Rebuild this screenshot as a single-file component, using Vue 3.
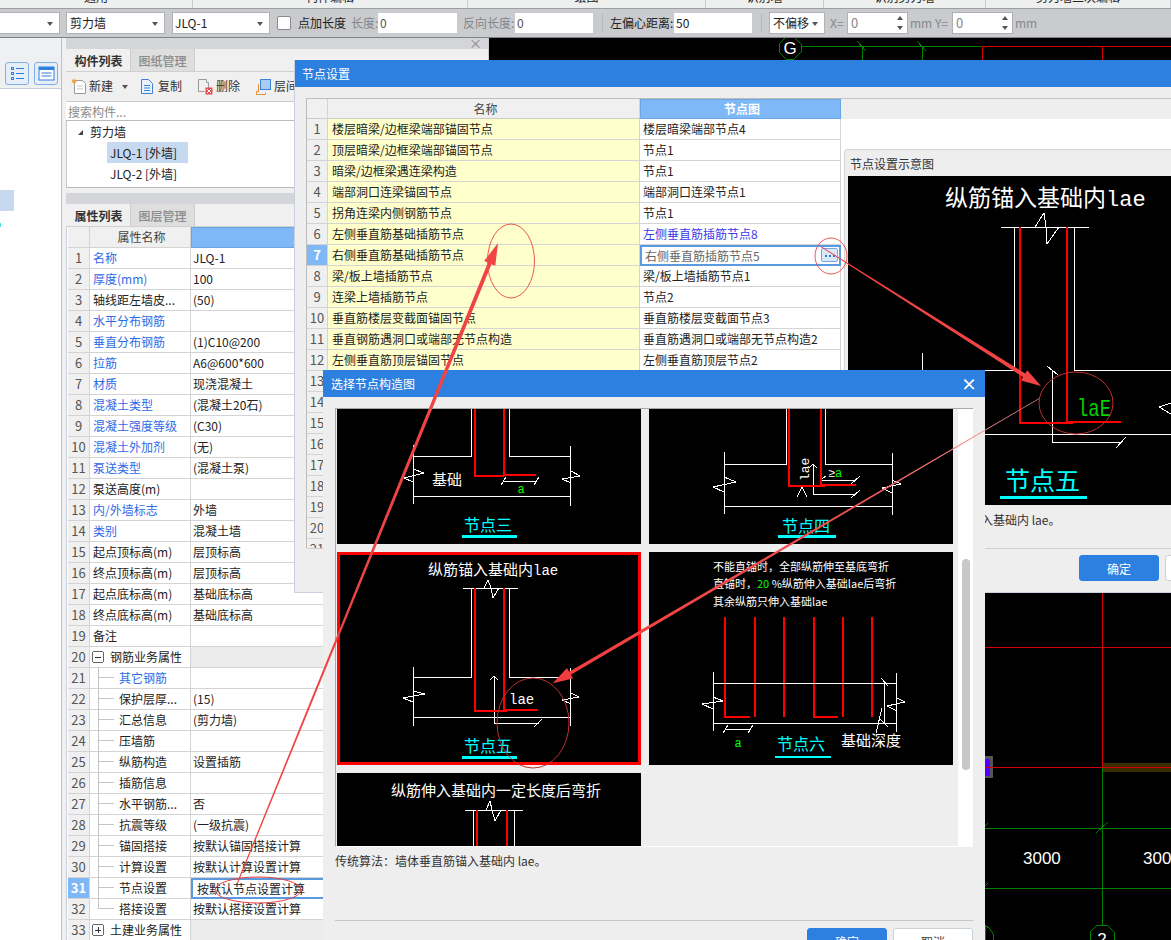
<script setup>
const ribbon = ['通用', '构件编辑', '绘图', '识别墙', '识别剪力墙', '剪力墙二次编辑']

const props = [
  { name: '名称', val: 'JLQ-1', blue: true },
  { name: '厚度(mm)', val: '100', blue: true },
  { name: '轴线距左墙皮...', val: '(50)' },
  { name: '水平分布钢筋', val: '', blue: true },
  { name: '垂直分布钢筋', val: '(1)C10@200', blue: true },
  { name: '拉筋', val: 'A6@600*600', blue: true },
  { name: '材质', val: '现浇混凝土', blue: true },
  { name: '混凝土类型', val: '(混凝土20石)', blue: true },
  { name: '混凝土强度等级', val: '(C30)', blue: true },
  { name: '混凝土外加剂', val: '(无)', blue: true },
  { name: '泵送类型', val: '(混凝土泵)', blue: true },
  { name: '泵送高度(m)', val: '' },
  { name: '内/外墙标志', val: '外墙', blue: true },
  { name: '类别', val: '混凝土墙', blue: true },
  { name: '起点顶标高(m)', val: '层顶标高' },
  { name: '终点顶标高(m)', val: '层顶标高' },
  { name: '起点底标高(m)', val: '基础底标高' },
  { name: '终点底标高(m)', val: '基础底标高' },
  { name: '备注', val: '' },
  { name: '钢筋业务属性', group: 'minus' },
  { name: '其它钢筋', val: '', blue: true, tree: true },
  { name: '保护层厚...', val: '(15)', tree: true },
  { name: '汇总信息', val: '(剪力墙)', tree: true },
  { name: '压墙筋', val: '', tree: true },
  { name: '纵筋构造', val: '设置插筋', tree: true },
  { name: '插筋信息', val: '', tree: true },
  { name: '水平钢筋...', val: '否', tree: true },
  { name: '抗震等级', val: '(一级抗震)', tree: true },
  { name: '锚固搭接', val: '按默认锚固搭接计算', tree: true },
  { name: '计算设置', val: '按默认计算设置计算', tree: true },
  { name: '节点设置', val: '按默认节点设置计算', tree: true, sel: true },
  { name: '搭接设置', val: '按默认搭接设置计算', tree: true, last: true },
  { name: '土建业务属性', group: 'plus' }
]

const nodes = [
  ['楼层暗梁/边框梁端部锚固节点', '楼层暗梁端部节点4'],
  ['顶层暗梁/边框梁端部锚固节点', '节点1'],
  ['暗梁/边框梁遇连梁构造', '节点1'],
  ['端部洞口连梁锚固节点', '端部洞口连梁节点1'],
  ['拐角连梁内侧钢筋节点', '节点1'],
  ['左侧垂直筋基础插筋节点', '左侧垂直筋插筋节点8'],
  ['右侧垂直筋基础插筋节点', '右侧垂直筋插筋节点5'],
  ['梁/板上墙插筋节点', '梁/板上墙插筋节点1'],
  ['连梁上墙插筋节点', '节点2'],
  ['垂直筋楼层变截面锚固节点', '垂直筋楼层变截面节点3'],
  ['垂直钢筋遇洞口或端部无节点构造', '垂直筋遇洞口或端部无节点构造2'],
  ['左侧垂直筋顶层锚固节点', '左侧垂直筋顶层节点2'],
  ['', ''], ['', ''], ['', ''], ['', ''], ['', ''], ['', ''], ['', ''], ['', ''], ['', '']
]
</script>

<template>
  <div class="app">
    <div class="ribbon">
      <div v-for="r in ribbon" :key="r" class="rib-cell"><span>{{ r }}</span></div>
    </div>

    <div class="toolbar">
      <div class="select s1"><i class="caret"></i></div>
      <div class="select s2">剪力墙<i class="caret"></i></div>
      <div class="select s3">JLQ-1<i class="caret"></i></div>
      <span class="check"></span>
      <span class="lb l-point">点加长度</span>
      <span class="lb dim l-len">长度:</span>
      <span class="inp i-len">0</span>
      <span class="lb dim l-rev">反向长度:</span>
      <span class="inp i-rev">0</span>
      <span class="tsep"></span>
      <span class="lb l-off">左偏心距离:</span>
      <span class="inp i-off">50</span>
      <span class="tsep"></span>
      <div class="select s4">不偏移<i class="caret"></i></div>
      <span class="lb dim l-x">X=</span>
      <span class="spin">0<i class="sp-up"></i><i class="sp-dn"></i></span>
      <span class="lb dim l-mm">mm</span>
      <span class="lb dim l-y">Y=</span>
      <span class="spin">0<i class="sp-up"></i><i class="sp-dn"></i></span>
      <span class="lb dim l-mm">mm</span>
    </div>

    <div class="work">
      <aside class="left">
        <div class="left-head">
          <span class="lbtn">
            <svg width="15" height="15" viewBox="0 0 15 15"><g fill="none" stroke="#2d7fe0"><rect x="1.5" y="1.5" width="2" height="2"/><rect x="1.5" y="6.5" width="2" height="2"/><rect x="1.5" y="11.5" width="2" height="2"/><path d="M6 2.5h8M6 7.5h8M6 12.5h8"/></g></svg>
          </span>
          <span class="lbtn">
            <svg width="17" height="15" viewBox="0 0 17 15"><rect x="1" y="1" width="15" height="13" fill="#fff" stroke="#2d7fe0"/><rect x="1" y="1" width="15" height="3" fill="#2d7fe0"/><path d="M3.5 7h10M3.5 10h10" stroke="#2d7fe0"/></svg>
          </span>
        </div>
        <div class="left-body">
          <div class="left-sel"></div>
          <div class="left-tick"></div>
        </div>
      </aside>

      <section class="mid">
        <div class="dock-title"><span class="dock-x">×</span></div>
        <div class="tabs">
          <span class="tab on">构件列表</span><span class="tab">图纸管理</span>
        </div>
        <div class="mid-tools">
          <span class="tool t-new">
            <svg width="16" height="17" viewBox="0 0 16 17"><path d="M3.5 2.5h8l3 3v10h-11z" fill="#fff" stroke="#9a9a9a"/><path d="M6 8h6M6 11h6" stroke="#c8c8c8"/><path d="M3 0l.8 2 2-.6L4.600 3l1.400 1.400-2 .1L3 6.500 2.200 4.500l-2-.1L1.600 3 .4 1.400l2 .6z" fill="#f0a030"/></svg>
            新建<i class="caret tool-caret"></i>
          </span>
          <span class="tool t-copy">
            <svg width="14" height="17" viewBox="0 0 14 17"><path d="M1.500 1.500h7l4 4v10h-11z" fill="#eaf3fd" stroke="#3a83d8"/><path d="M4 7.500h6M4 10h6M4 12.500h6" stroke="#3a83d8"/></svg>
            复制
          </span>
          <span class="tool t-del">
            <svg width="16" height="17" viewBox="0 0 16 17"><path d="M1.500 1.500h8v3h2v6M1.500 1.500v12h6" fill="none" stroke="#9a9a9a"/><rect x="8.500" y="9.500" width="7" height="7" fill="#e05050"/><path d="M10 11l4 4M14 11l-4 4" stroke="#fff"/></svg>
            删除
          </span>
          <span class="tool t-layer">
            <svg width="16" height="17" viewBox="0 0 16 17"><path d="M3.500 6v7.500h-2v3h9v-2" fill="none" stroke="#ee8a30"/><rect x="5.500" y="1.500" width="10" height="10" fill="#a8cdf5" stroke="#3a83d8"/></svg>
            层间复制
          </span>
        </div>
        <div class="search">搜索构件...</div>
        <div class="comp-tree">
          <div class="tree-root"><i class="tree-tri"></i>剪力墙</div>
          <div class="tree-leaf on">JLQ-1 [外墙]</div>
          <div class="tree-leaf">JLQ-2 [外墙]</div>
        </div>
        <div class="mid-gap"></div>
        <div class="dock-title"></div>
        <div class="tabs">
          <span class="tab on">属性列表</span><span class="tab">图层管理</span>
        </div>
        <div class="pt">
          <div class="pt-row pt-head">
            <div class="c-no"></div><div class="c-name c-hn">属性名称</div><div class="c-val c-hv">属性值</div>
          </div>
          <div v-for="(p, i) in props" :key="i" class="pt-row" :class="{ gr: p.group }">
            <div class="c-no" :class="{ on: p.sel }">{{ i + 1 }}</div>
            <div class="c-name" :class="{ blue: p.blue, tree: p.tree, last: p.last, group: p.group }">
              <svg v-if="p.group" class="pm" width="12" height="12" viewBox="0 0 12 12" shape-rendering="crispEdges">
                <rect x="0.500" y="0.500" width="11" height="11" rx="2" fill="#fff" stroke="#666" />
                <path :d="p.group === 'plus' ? 'M3 6h6M6 3v6' : 'M3 6h6'" stroke="#333" />
              </svg>{{ p.name }}
            </div>
            <div class="c-val" :class="{ sel: p.sel }">{{ p.val }}</div>
          </div>
        </div>
      </section>

      <div class="canvas">
        <svg class="cad" width="682" height="902" viewBox="489 38 682 902" shape-rendering="crispEdges">
          <g fill="none" stroke="#007f00">
            <polygon points="786,37 794,37 801,44 801,52 794,59 786,59 779,52 779,44" />
            <path d="M801 46H981M862 46V60M922 46V60M857 41L866 51M917 41L926 51" />
            <path d="M1102 768V925M985 828H1171M985 888H1171M1096 833L1108 822M985 826L988 823M985 886L988 883" />
            <polygon points="1097,925 1107,925 1114,932 1114,941 1090,941 1090,932" />
            <polygon points="985,925 990,929 993,934 993,941 985,941" />
          </g>
          <text x="790" y="54" class="cad-t g" text-anchor="middle">G</text>
          <g fill="none" stroke="#d40000">
            <path d="M981 46H1171M982 46V60M1102 46V60" />
          </g>
          <rect x="1103" y="763" width="68" height="9" fill="#3a2d00" />
          <rect x="985" y="756" width="8" height="22" fill="#555" />
          <rect x="985" y="759" width="5" height="17" fill="#5000ff" />
          <g fill="none" stroke="#d40000">
            <path d="M1102 592V767M985 647H1171M985 767H1171" />
          </g>
          <text x="1023" y="864" class="cad-t n">3000</text>
          <text x="1143" y="864" class="cad-t n">3000</text>
          <text x="1102" y="945" class="cad-t g" text-anchor="middle">2</text>
        </svg>
      </div>
    </div>

    <div class="dialog d1">
      <div class="d-title">节点设置</div>
      <div class="d1-main">
        <div class="nt">
          <div class="nt-row nt-head">
            <div class="n-no"></div><div class="n-a">名称</div><div class="n-b">节点图</div>
          </div>
          <div v-for="(n, i) in nodes" :key="i" class="nt-row">
            <div class="n-no" :class="{ on: i === 6 }">{{ i + 1 }}</div>
            <div class="n-a">{{ n[0] }}</div>
            <div class="n-b" :class="{ link: i === 5, edit: i === 6 }">
              {{ n[1] }}
              <svg v-if="i === 6" class="more" width="17" height="14" viewBox="0 0 17 14" shape-rendering="crispEdges">
                <rect x="0.500" y="0.500" width="16" height="13" rx="2" fill="#d8e8fa" stroke="#7aa8dc" />
                <rect x="4" y="7" width="2" height="2" fill="#3a78c8" />
                <rect x="8" y="7" width="2" height="2" fill="#3a78c8" />
                <rect x="12" y="7" width="2" height="2" fill="#3a78c8" />
              </svg>
            </div>
          </div>
        </div>
        <div class="d1-right">
          <div class="d1-head"></div>
          <div class="d1-white">
            <div class="group">
              <div class="g-title">节点设置示意图</div>
              <svg class="preview" width="323" height="329" viewBox="848 176 323 329" shape-rendering="crispEdges">
                <rect x="848" y="176" width="323" height="329" fill="#000" />
                <text x="945" y="206" class="cn big">纵筋锚入基础内<tspan class="mono" font-size="22">lae</tspan></text>
                <g fill="none" stroke="#fff">
                  <path d="M1001 227H1089M1014 227V370H922M1074 227V370H1171M922 353V420M985 434H1171" />
                  <path d="M1035 227L1044 213L1046 227L1047 244L1059 227" />
                  <path d="M1052 370V442H1122M1047 366L1058 375M1116 448L1126 437M1171 403L1159 407L1171 414" />
                </g>
                <g fill="none" stroke="#f00" stroke-width="2">
                  <path d="M1020 227V423H1073M1067 227V422H1121" />
                </g>
                <text x="1077" y="416" class="mono lae-big" textLength="34" lengthAdjust="spacingAndGlyphs">laE</text>
                <text x="1005" y="490" class="cn cy-big">节点五</text>
                <rect x="1000" y="496" width="87" height="3" fill="#0ff" />
              </svg>
              <div class="g-desc">传统算法：墙体垂直筋锚入基础内 lae。</div>
            </div>
          </div>
        </div>
      </div>
      <div class="d-foot d1-foot">
        <span class="btn pri">确定</span><span class="btn">取消</span>
      </div>
    </div>

    <div class="dialog d2">
      <div class="d-title">选择节点构造图<span class="d-x">×</span></div>
      <div class="d2-body">
        <div class="listbox">
          <div class="list">
            <svg class="cell" width="304" height="135" viewBox="337 409 304 135" shape-rendering="crispEdges">
              <g fill="none" stroke="#fff">
                <path d="M471 409V456H413M509 409V456H570M413 445V504M570 446V506M413 496H570" />
                <path d="M413 469L424 473L404 478L413 482M571 471L580 476L562 479L571 483" />
                <path d="M504 481H537M501 485L506 477M534 485L539 477" />
              </g>
              <g fill="none" stroke="#f00" stroke-width="2">
                <path d="M475 409V476H504M504 409V475H536" />
              </g>
              <text x="521" y="493" class="mono gr-t" text-anchor="middle">a</text>
              <text x="432" y="485" class="cn wt-15">基础</text>
              <text x="464" y="531" class="cn cy-16">节点三</text>
              <rect x="462" y="535" width="55" height="3" fill="#0ff" />
            </svg>
            <svg class="cell" width="304" height="135" viewBox="649 409 304 135" shape-rendering="crispEdges">
              <g fill="none" stroke="#fff">
                <path d="M786 409V464H724M825 409V464H892M724 452V514M892 453V515M724 506H892" />
                <path d="M724 477L736 482L713 487L724 492M892 480L901 484L882 488L892 493" />
                <path d="M813 464V494H856M820 480H856M809 468L813 464L817 468M851 484L860 476M851 498L860 490M820 480L826 476" />
                <path d="M797 497L802 487L807 497" />
              </g>
              <g fill="none" stroke="#f00" stroke-width="2">
                <path d="M789 409V486H825M821 409V485H856" />
              </g>
              <text x="809" y="481" class="mono wt-13" transform="rotate(-90 809 481)">lae</text>
              <text x="828" y="477" class="mono wt-12">≥</text>
              <text x="835" y="477" class="mono gr-t">a</text>
              <text x="782" y="532" class="cn cy-16">节点四</text>
              <rect x="778" y="535" width="58" height="3" fill="#0ff" />
            </svg>
            <svg class="cell" width="304" height="213" viewBox="337 552 304 213" shape-rendering="crispEdges">
              <rect x="338.500" y="553.500" width="301" height="210" fill="#000" stroke="#f00" stroke-width="3" />
              <text x="428" y="575" class="cn wt-15">纵筋锚入基础内<tspan class="mono" font-size="14">lae</tspan></text>
              <g fill="none" stroke="#fff">
                <path d="M463 588H518M471 588V677H413M509 588V677H570M413 667V726M570 668V726M413 717H570" />
                <path d="M484 588L488 580L491 588L493 598L499 588" />
                <path d="M413 691L425 694L403 698L413 702M571 693L579 697L562 700L571 704" />
                <path d="M494 676V723H539M490 680L494 676L498 680M534 727L542 719" />
              </g>
              <g fill="none" stroke="#f00" stroke-width="2">
                <path d="M475 588V711H507M504 588V710H538" />
              </g>
              <text x="509" y="704" class="mono wt-14">lae</text>
              <text x="464" y="752" class="cn cy-16">节点五</text>
              <rect x="462" y="756" width="55" height="3" fill="#0ff" />
            </svg>
            <svg class="cell" width="304" height="213" viewBox="649 552 304 213" shape-rendering="crispEdges">
              <text x="713" y="571" class="cn wt-11">不能直锚时，全部纵筋伸至基底弯折</text>
              <text x="713" y="588" class="cn wt-11">直锚时，<tspan fill="#0f0">20</tspan> %纵筋伸入基础lae后弯折</text>
              <text x="713" y="606" class="cn wt-11">其余纵筋只伸入基础lae</text>
              <g fill="none" stroke="#f00" stroke-width="2">
                <path d="M725 617V717H750M755 617V717M784 617V717M814 617V717H838M843 617V717M872 617V717" />
              </g>
              <g fill="none" stroke="#fff">
                <path d="M713 683H896M713 723H896M713 672V731M896 673V732" />
                <path d="M713 697L723 701L702 704L713 709M897 698L905 702L887 706L897 711" />
                <path d="M884 683V723M881 678L888 686M882 708L876 733M880 719L888 727" />
                <path d="M725 729H750M723 733L728 725M748 733L753 725" />
              </g>
              <text x="738" y="747" class="mono gr-t" text-anchor="middle">a</text>
              <text x="777" y="750" class="cn cy-16">节点六</text>
              <rect x="775" y="756" width="56" height="2" fill="#0ff" />
              <text x="841" y="746" class="cn wt-15">基础深度</text>
            </svg>
            <svg class="cell" width="304" height="73" viewBox="337 773 304 73" shape-rendering="crispEdges">
              <text x="391" y="796" class="cn wt-15">纵筋伸入基础内一定长度后弯折</text>
              <g fill="none" stroke="#fff">
                <path d="M465 810H523M473 810V846M514 810V846M486 810L490 801L492 810L495 821L501 810" />
              </g>
              <g fill="none" stroke="#f00" stroke-width="2">
                <path d="M477 810V846M507 810V846" />
              </g>
            </svg>
          </div>
          <div class="sb"><div class="thumb"></div></div>
        </div>
        <div class="d2-desc">传统算法：墙体垂直筋锚入基础内 lae。</div>
        <div class="d-foot d2-foot">
          <span class="btn pri">确定</span><span class="btn">取消</span>
        </div>
      </div>
    </div>

    <svg class="marks" width="1171" height="940" viewBox="0 0 1171 940">
      <defs>
        <linearGradient id="fade" gradientUnits="userSpaceOnUse" x1="1040" y1="398" x2="553" y2="683">
          <stop offset="0" stop-color="#f7a0a0" />
          <stop offset="0.4" stop-color="#f05050" />
          <stop offset="1" stop-color="#f03c3c" />
        </linearGradient>
      </defs>
      <polygon fill="#f04444" points="237.500,884.200 491.500,264.200 495.300,265.700 498,243 484.100,261.100 487.900,262.600 236.500,883.800" />
      <polygon fill="#f04444" points="821.200,246.300 1025.200,373.600 1027.300,370.200 1041,386 1020.900,380.400 1023,377 820.800,246.900" />
      <polygon fill="url(#fade)" points="1040.150,398.250 570.900,674.750 573,678.400 552.700,683.300 567,668 569.100,671.650 1039.850,397.750" />
      <g fill="none" stroke-width="1">
        <ellipse cx="511" cy="261" rx="23.500" ry="37" stroke="#ee5555" />
        <ellipse cx="831" cy="256" rx="16" ry="18" stroke="#ee5555" />
        <ellipse cx="533" cy="723" rx="36" ry="45" stroke="#c03030" />
        <ellipse cx="1076" cy="403" rx="37" ry="31" stroke="#c03030" />
        <ellipse cx="258" cy="890" rx="43" ry="13" stroke="#e84040" />
      </g>
    </svg>
  </div>
</template>

<style scoped>
.app {
  position: relative;
  width: 1171px;
  height: 940px;
  overflow: hidden;
  background: #f0f0f0;
  color: #222;
  font: 12px/1.2 "Noto Sans CJK SC", "Noto Sans", sans-serif;
}

/* ribbon */
.ribbon {
  display: grid;
  grid-template-columns: 193px 275px 238px 118px 162px 1fr;
  height: 8px;
  background: #eef0f0;
  border-bottom: 1px solid #9c9ea2;
}
.rib-cell {
  display: flex;
  justify-content: center;
  align-items: flex-end;
  height: 8px;
  overflow: hidden;
  border-right: 1px solid #c8cacc;
}
.rib-cell span { margin-bottom: 5px; line-height: 12px; white-space: nowrap; }

/* toolbar */
.toolbar {
  display: flex;
  align-items: center;
  height: 28px;
  background: #c9cbce;
  border-bottom: 1px solid #808285;
  white-space: nowrap;
  font-size: 13px;
}
.select {
  position: relative;
  flex: none;
  box-sizing: border-box;
  height: 22px;
  line-height: 20px;
  padding-left: 3px;
  background: #fff;
  border: 1px solid #b0b2b5;
}
.caret {
  position: absolute;
  right: 6px;
  top: 9px;
  border: 3px solid transparent;
  border-top: 4px solid #555;
  border-bottom: 0;
}
.s1 { width: 70px; margin-left: -10px; }
.s2 { width: 99px; margin-left: 6px; font-size: 12px; }
.s3 { width: 98px; margin-left: 7px; font-size: 12px; padding-left: 2px; }
.s4 { width: 56px; margin-left: 7px; font-size: 12px; }
.check {
  flex: none;
  box-sizing: border-box;
  width: 14px;
  height: 14px;
  margin-left: 7px;
  background: #fff;
  border: 1px solid #8a8a8a;
  border-radius: 2px;
}
.lb { flex: none; font-size: 12px; }
.dim { color: #85878a; }
.l-point { width: 48px; margin-left: 7px; }
.l-len { width: 27px; margin-left: 5px; }
.l-rev { width: 52px; margin-left: 6px; }
.l-off { width: 64px; margin-left: 7px; }
.l-x { width: 17px; margin-left: 5px; }
.l-y { width: 17px; }
.l-mm { width: 25px; margin-left: 2px; }
.inp {
  flex: none;
  box-sizing: border-box;
  height: 20px;
  line-height: 20px;
  padding-left: 2px;
  background: #fff;
  font-size: 12px;
}
.i-len { width: 79px; color: #555; }
.i-rev { width: 78px; color: #555; }
.i-off { width: 78px; }
.tsep { flex: none; width: 1px; height: 18px; margin-left: 9px; background: #b6b8bb; }
.spin {
  position: relative;
  flex: none;
  box-sizing: border-box;
  width: 61px;
  height: 22px;
  line-height: 20px;
  padding-left: 3px;
  background: #fff;
  border: 1px solid #aeb0b3;
  color: #888;
}
.sp-up, .sp-dn { position: absolute; right: 4px; border: 3px solid transparent; }
.sp-up { top: 3px; border-bottom: 4px solid #555; border-top: 0; }
.sp-dn { bottom: 3px; border-top: 4px solid #555; border-bottom: 0; }

/* workspace */
.work { display: flex; height: 902px; }
.left {
  flex: none;
  width: 61px;
  background: #fff;
  border-right: 1px solid #bfc0c2;
}
.left-head {
  display: flex;
  gap: 5px;
  box-sizing: border-box;
  height: 51px;
  padding: 24px 0 0 5px;
  background: #eff0f1;
  border-bottom: 1px solid #c6d0dc;
}
.lbtn {
  box-sizing: border-box;
  display: flex;
  align-items: center;
  justify-content: center;
  width: 24px;
  height: 23px;
  background: #e6eef8;
  border: 1px solid #7fb0ea;
  border-radius: 3px;
}
.left-body { padding-top: 101px; }
.left-sel { width: 14px; height: 21px; background: #c7d9f0; }
.left-tick { width: 1px; height: 4px; margin-top: 12px; background: #40e8f0; }

.mid {
  flex: none;
  box-sizing: border-box;
  width: 423px;
  margin-left: 4px;
  border-right: 1px solid #ccc;
  overflow: hidden;
}
.dock-title {
  position: relative;
  height: 11px;
  background: #d4d5d9;
}
.dock-x {
  position: absolute;
  right: 6px;
  top: -2px;
  color: #888;
  font-size: 13px;
  line-height: 14px;
}
.tabs {
  display: flex;
  height: 22px;
  background: #f0f0f0;
  border-bottom: 1px solid #d0d0d0;
  padding-left: 1px;
}
.tab {
  box-sizing: border-box;
  width: 64px;
  line-height: 23px;
  text-align: center;
  color: #8a8a8a;
  background: #dedede;
  border-right: 1px solid #ccc;
  font-weight: 500;
}
.tab.on { background: #f0f0f0; color: #333; font-weight: 700; }
.mid-tools {
  position: relative;
  display: flex;
  align-items: center;
  box-sizing: border-box;
  height: 30px;
  padding-left: 5px;
  background: #f0f0f0;
  border-bottom: 1px solid #ccc;
  white-space: nowrap;
  color: #333;
}
.tool { position: relative; display: flex; align-items: center; gap: 3px; flex: none; }
.t-new { width: 69px; gap: 2px; }
.t-copy { width: 57px; gap: 4px; }
.t-del { width: 58px; }
.tool-caret { right: 12px; top: 7px; }
.search {
  box-sizing: border-box;
  height: 19px;
  line-height: 20px;
  padding-left: 2px;
  background: #fff;
  border-bottom: 1px solid #bbb;
  color: #8a8a8a;
}
.comp-tree {
  box-sizing: border-box;
  height: 67px;
  background: #fff;
  border-bottom: 1px solid #bbb;
  border-left: 1px solid #c8c8c8;
}
.tree-root {
  display: flex;
  align-items: center;
  box-sizing: border-box;
  height: 21px;
  padding: 2px 0 0 11px;
  color: #222;
}
.tree-tri {
  width: 0;
  height: 0;
  margin-right: 7px;
  border-left: 5px solid transparent;
  border-bottom: 5px solid #444;
}
.tree-leaf {
  width: 81px;
  box-sizing: border-box;
  height: 21px;
  line-height: 21px;
  margin-left: 40px;
  padding-left: 3px;
  white-space: nowrap;
}
.tree-leaf.on { background: #c7d9f0; }
.mid-gap { height: 5px; background: #f0f0f0; }

/* property table */
.pt { padding-left: 1px; background: #fff; border-left: 1px solid #c8d0dc; }
.pt-row {
  display: grid;
  grid-template-columns: 22px 101px 238px;
  height: 21px;
}
.pt-row > div { box-sizing: border-box; height: 21px; line-height: 20px; border-bottom: 1px solid #d4d4d4; border-right: 1px solid #d4d4d4; white-space: nowrap; }
.c-no { background: #f0f0f0; text-align: center; color: #555; font-size: 13px; }
.c-no.on { background: #7fb8f7; color: #fff; font-weight: 700; }
.c-name { padding-left: 3px; }
.c-val { padding-left: 2px; }
.blue { color: #2f6ae6; }
.pt-head > div { background: #f0f0f0; }
.pt-head .c-hn { text-align: center; color: #444; }
.pt-head .c-hv { background: #7fb8f7; border: 1px solid #6aa5e8; color: #fff; text-align: center; font-weight: 700; }
.gr > div { background: #fff; }
.gr > .c-val { background: #ececec; }
.gr > .c-no { background: #f0f0f0; }
.group { display: flex; align-items: center; padding-left: 2px; white-space: nowrap; }
.pm { flex: none; margin-right: 6px; }
.tree { position: relative; padding-left: 29px; }
.tree::before {
  content: "";
  position: absolute;
  left: 8px;
  top: 9px;
  width: 16px;
  height: 1px;
  background: #c4c4c4;
}
.tree::after {
  content: "";
  position: absolute;
  left: 8px;
  top: -1px;
  width: 1px;
  height: 22px;
  background: #c4c4c4;
}
.tree.last::after { height: 11px; }
.pt-row > .c-val.sel {
  border: 2px solid #5a9ae0;
  border-right: 0;
  padding-left: 4px;
  line-height: 17px;
}

.canvas { flex: 1; min-width: 0; background: #000; }
.cad { display: block; }
.cad-t { fill: #fff; }
.cad-t.g { font: 17px "Liberation Sans", sans-serif; }
.cad-t.n { font: 17px "Liberation Sans", sans-serif; }

/* dialogs */
.dialog {
  position: absolute;
  box-sizing: border-box;
  background: #eee;
  border-left: 1px solid #c8d0dc;
}
.d-title {
  position: relative;
  height: 27px;
  padding-left: 7px;
  line-height: 27px;
  background: #2d7fe0;
  color: #fff;
  font-size: 12px;
}
.d1 { left: 294px; top: 60px; width: 960px; height: 533px; border-bottom: 1px solid #c8d0dc; }
.d1-main { display: flex; height: 450px; padding: 11px 0 0 11px; }
.nt {
  flex: none;
  box-sizing: border-box;
  width: 535px;
  height: 450px;
  overflow: hidden;
  border: 1px solid #bdbdbd;
  border-bottom: 0;
  border-right: 0;
  background: #eee;
}
.nt-row {
  display: grid;
  grid-template-columns: 21px 312px 201px;
  height: 21px;
}
.nt-row > div {
  box-sizing: border-box;
  height: 21px;
  line-height: 20px;
  white-space: nowrap;
  border-bottom: 1px solid #d4d4d4;
  border-right: 1px solid #d4d4d4;
}
.nt-head { height: 20px; }
.nt-head > div { height: 20px; line-height: 20px; background: #f0f0f0; text-align: center; color: #444; border-bottom: 1px solid #ccc; }
.nt-head .n-b { background: #7fb8f7; border: 1px solid #6aa5e8; color: #fff; font-weight: 700; line-height: 18px; }
.n-no { background: #f0f0f0; text-align: center; color: #555; font-size: 13px; }
.n-no.on { background: #7fb8f7; color: #fff; font-weight: 700; }
.n-a { background: #ffffcc; padding-left: 4px; }
.n-b { background: #fff; padding-left: 3px; position: relative; }
.nt-row > .n-b.link { color: #3a3ae8; }
.nt-row > .n-b.edit {
  border: 2px solid #5a9ae0;
  line-height: 17px;
  padding-left: 3px;
  color: #666;
}
.more { position: absolute; right: 1px; top: 1px; }
.d1-right { flex: 1; min-width: 0; border-top: 1px solid #c4c4c4; }
.d1-head { height: 20px; background: #eee; }
.d1-white { height: 429px; padding-top: 30px; padding-left: 3px; box-sizing: border-box; background: #fff; }
.group-box { display: block; }
.d1-white > .group {
  display: block;
  box-sizing: border-box;
  height: 399px;
  padding-left: 3px;
  background: #eee;
  border-top: 1px solid #d4d4d4;
  border-left: 1px solid #d4d4d4;
  border-top-left-radius: 4px;
}
.g-title { height: 26px; line-height: 28px; padding-left: 2px; color: #333; }
.preview { display: block; }
.g-desc { height: 30px; line-height: 30px; padding-left: 1px; color: #333; white-space: nowrap; }
.d-foot { display: flex; gap: 6px; justify-content: flex-end; }
.d1-foot {
  box-sizing: border-box;
  height: 44px;
  margin-left: 12px;
  padding: 6px 9px 0 0;
  border-top: 1px solid #ccd0d4;
}
.btn {
  box-sizing: border-box;
  flex: none;
  width: 80px;
  height: 26px;
  line-height: 25px;
  text-align: center;
  background: #fff;
  border: 1px solid #c8d0d8;
  border-radius: 3px;
  color: #444;
}
.btn.pri { background: #2d7fe0; border-color: #2d7fe0; color: #fff; }

.d2 { left: 323px; top: 370px; width: 662px; height: 580px; z-index: 2; border-left: 0; }
.d2 .d-title { padding-left: 8px; }
.d-x {
  position: absolute;
  right: 8px;
  top: 0;
  font-size: 16px;
  font-weight: 700;
  line-height: 27px;
}
.d2-body { padding: 11px 12px 0; }
.listbox {
  display: flex;
  box-sizing: border-box;
  width: 638px;
  height: 439px;
  overflow: hidden;
  border-top: 1px solid #a8a8a8;
  border-left: 1px solid #a8a8a8;
  border-bottom: 1px solid #fff;
}
.list {
  flex: none;
  display: grid;
  grid-template-columns: 304px 304px;
  grid-auto-rows: max-content;
  gap: 8px;
  width: 622px;
  padding-left: 1px;
  box-sizing: border-box;
  align-content: start;
}
.cell { display: block; background: #000; }
.sb { flex: 1; background: #fff; padding: 150px 3px 0 4px; }
.thumb { width: 8px; height: 211px; background: #c8c8c8; border-radius: 4px; }
.d2-desc { height: 73px; padding-top: 6px; box-sizing: border-box; line-height: 16px; color: #333; }
.d2-foot { padding-top: 7px; border-top: 1px solid #c8c8c8; }

.cn { font-family: "Noto Sans CJK SC", sans-serif; }
.mono { font-family: "Liberation Mono", "DejaVu Sans Mono", monospace; }
.big { font-size: 23px; fill: #fff; }
.lae-big { font-size: 24px; fill: #00d000; }
.cy-big { font-size: 25px; fill: #0ff; }
.cy-16 { font-size: 16px; fill: #0ff; }
.wt-15 { font-size: 15px; fill: #fff; }
.wt-14 { font-size: 14px; fill: #fff; }
.wt-13 { font-size: 13px; fill: #fff; }
.wt-12 { font-size: 12px; fill: #fff; }
.wt-11 { font-size: 11px; fill: #fff; }
.gr-t { font-size: 12px; fill: #0f0; }

.marks { position: absolute; left: 0; top: 0; z-index: 3; pointer-events: none; }
</style>
